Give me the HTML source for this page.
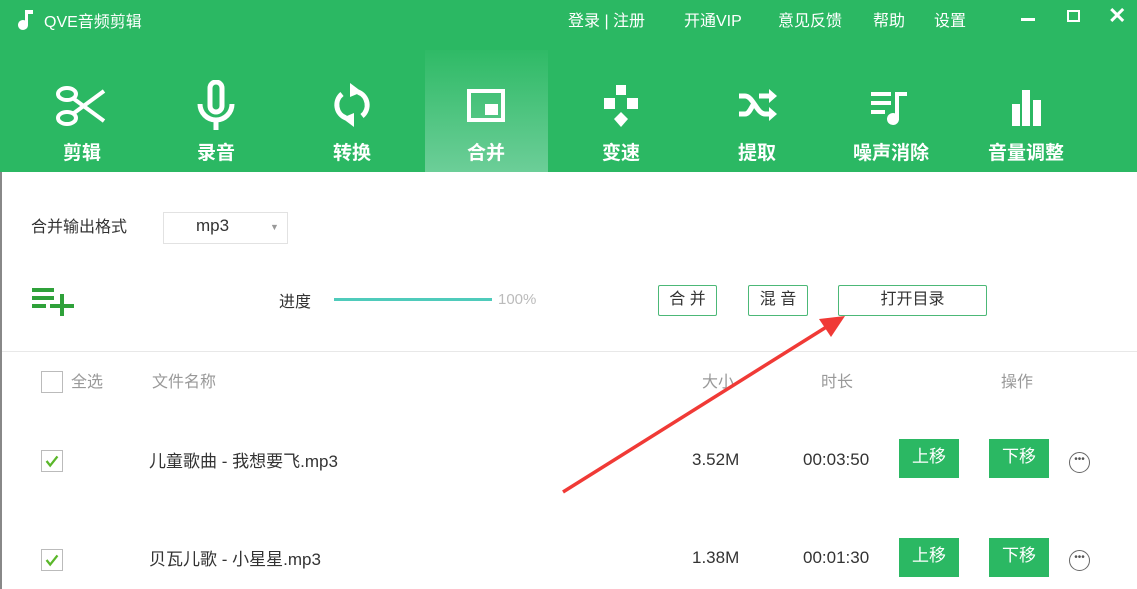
<!DOCTYPE html>
<html><head><meta charset="utf-8"><style>
*{margin:0;padding:0;box-sizing:border-box}
body{width:1137px;height:589px;overflow:hidden;background:#fff;position:relative;font-family:"Liberation Sans","Noto Sans CJK SC",sans-serif;color:#333}
.a{position:absolute;white-space:nowrap}
#hd{position:absolute;left:0;top:0;width:1137px;height:172px;background:#2bb863}
.top{color:#fff;font-size:16px;top:7px}
.tab{position:absolute;top:80px;width:120px;text-align:center;color:#fff}
.tab svg{display:block;margin:0 auto}
.tab span{position:absolute;left:0;right:0;top:58px;font-size:19px;font-weight:bold}
.btn{position:absolute;border:1.5px solid #4cb877;border-radius:2px;font-size:16px;text-align:center;color:#333;line-height:28px;height:31px}
.g{position:absolute;background:#2bb863;color:#fff;font-size:17px;text-align:center;width:60px;height:39px;line-height:36px}
.cb{position:absolute;width:22px;height:22px;border:1.5px solid #bbb;background:#fff}
.gr{color:#999;font-size:16px}
.more{position:absolute;width:21px;height:21px;border:1.5px solid #666;border-radius:50%;text-align:center;font-size:10px;line-height:14px;color:#555}
</style></head><body>
<div id="hd">
<svg class="a" style="left:16px;top:8px" width="18" height="22" viewBox="0 0 18 22"><path d="M9 2h8v4H12V17a5 5 0 1 1-3-4.6z" fill="#fff"/></svg>
<div class="a" style="left:44px;top:8px;color:#fff;font-size:16px">QVE音频剪辑</div>
<div class="a top" style="left:568px">登录 | 注册</div>
<div class="a top" style="left:684px">开通VIP</div>
<div class="a top" style="left:778px">意见反馈</div>
<div class="a top" style="left:873px">帮助</div>
<div class="a top" style="left:934px">设置</div>
<div class="a" style="left:1021px;top:18px;width:14px;height:3px;background:#fff"></div>
<div class="a" style="left:1067px;top:10px;width:13px;height:12px;border:2px solid #fff"></div>
<div class="a" style="left:1108px;top:3px;color:#fff;font-size:22px;font-weight:bold">✕</div>
<div class="a" style="left:425px;top:50px;width:123px;height:122px;background:linear-gradient(#2fba66,#6cce98)"></div>

<div class="tab" style="left:22px"><svg width="60" height="50" viewBox="0 0 60 50"><g fill="none" stroke="#fff" stroke-width="4"><ellipse cx="15" cy="14" rx="9" ry="6"/><ellipse cx="15" cy="38" rx="9" ry="6"/><path d="M22 19l30 22M22 33l30-22"/></g></svg><span>剪辑</span></div>
<div class="tab" style="left:156px"><svg width="60" height="50" viewBox="0 0 60 50"><g fill="none" stroke="#fff" stroke-width="5"><rect x="24" y="2" width="12" height="30" rx="6"/><path d="M14 24a16 16 0 0 0 32 0M30 40v10"/></g></svg><span>录音</span></div>
<div class="tab" style="left:292px"><svg width="60" height="50" viewBox="0 0 60 50"><g fill="none" stroke="#fff" stroke-width="5"><path d="M36 12a14 14 0 0 1 4 24M24 38a14 14 0 0 1-4-24"/></g><path d="M28 3l12 9-12 5zM32 47l-12-9 12-5z" fill="#fff"/></svg><span>转换</span></div>
<div class="tab" style="left:426px"><svg width="60" height="50" viewBox="0 0 60 50"><rect x="13" y="11" width="34" height="29" fill="none" stroke="#fff" stroke-width="4"/><rect x="29" y="24" width="13" height="11" fill="#fff"/></svg><span>合并</span></div>
<div class="tab" style="left:561px"><svg width="60" height="50" viewBox="0 0 60 50"><g fill="#fff"><rect x="25" y="5" width="10" height="10"/><rect x="13" y="18" width="11" height="11"/><rect x="36" y="18" width="11" height="11"/><path d="M30 32l7 7-7 8-7-8z"/></g></svg><span>变速</span></div>
<div class="tab" style="left:697px"><svg width="60" height="50" viewBox="0 0 60 50"><g fill="none" stroke="#fff" stroke-width="5"><path d="M12 16h6c8 0 12 18 20 18h6M12 34h6c4 0 6-6 8-9M32 16h12"/></g><path d="M42 9l8 7-8 7zM42 27l8 7-8 7z" fill="#fff"/></svg><span>提取</span></div>
<div class="tab" style="left:831px"><svg width="60" height="50" viewBox="0 0 60 50"><g fill="#fff"><rect x="10" y="12" width="20" height="4"/><rect x="10" y="21" width="20" height="4"/><rect x="10" y="30" width="14" height="4"/><rect x="34" y="12" width="12" height="4"/><rect x="34" y="12" width="4" height="28"/><circle cx="32" cy="39" r="6"/></g></svg><span>噪声消除</span></div>
<div class="tab" style="left:966px"><svg width="60" height="50" viewBox="0 0 60 50"><g fill="#fff"><rect x="16" y="24" width="8" height="22"/><rect x="26" y="10" width="8" height="36"/><rect x="37" y="20" width="8" height="26"/></g></svg><span>音量调整</span></div>
</div>
<div class="a" style="left:0;top:172px;width:2px;height:417px;background:#888"></div>

<div class="a" style="left:31px;top:213px;font-size:16px">合并输出格式</div>
<div class="a" style="left:163px;top:212px;width:125px;height:32px;border:1px solid #e2e2e2"></div>
<div class="a" style="left:196px;top:216px;font-size:17px">mp3</div>
<div class="a" style="left:270px;top:222px;font-size:9px;color:#999">▼</div>

<svg class="a" style="left:32px;top:288px" width="44" height="28" viewBox="0 0 44 28"><g fill="#2fa13a"><rect x="0" y="0" width="22" height="4"/><rect x="0" y="8" width="22" height="4"/><rect x="0" y="16" width="14" height="4"/><rect x="18" y="16" width="24" height="4"/><rect x="28" y="6" width="4" height="22"/></g></svg>
<div class="a" style="left:279px;top:288px;font-size:16px">进度</div>
<div class="a" style="left:334px;top:298px;width:158px;height:3px;background:#4fcbbb"></div>
<div class="a gr" style="left:498px;top:291px;font-size:15px;color:#bbb">100%</div>

<div class="btn" style="left:658px;top:285px;width:59px">合 并</div>
<div class="btn" style="left:748px;top:285px;width:60px">混 音</div>
<div class="btn" style="left:838px;top:285px;width:149px">打开目录</div>

<div class="a" style="left:2px;top:351px;width:1135px;height:1px;background:#e8e8e8"></div>

<div class="cb" style="left:41px;top:371px"></div>
<div class="a gr" style="left:71px;top:368px">全选</div>
<div class="a gr" style="left:152px;top:368px">文件名称</div>
<div class="a gr" style="left:702px;top:368px">大小</div>
<div class="a gr" style="left:821px;top:368px">时长</div>
<div class="a gr" style="left:1001px;top:368px">操作</div>

<svg class="cb" style="left:41px;top:450px" viewBox="0 0 22 22"><path d="M5 11l4 5 8-10" fill="none" stroke="#5ab72a" stroke-width="2.5"/></svg>
<div class="a" style="left:149px;top:447px;font-size:17px">儿童歌曲 - 我想要飞.mp3</div>
<div class="a" style="left:692px;top:450px;font-size:17px">3.52M</div>
<div class="a" style="left:803px;top:450px;font-size:17px">00:03:50</div>
<div class="g" style="left:899px;top:439px">上移</div>
<div class="g" style="left:989px;top:439px">下移</div>
<div class="more" style="left:1069px;top:452px">•••</div>

<svg class="cb" style="left:41px;top:549px" viewBox="0 0 22 22"><path d="M5 11l4 5 8-10" fill="none" stroke="#5ab72a" stroke-width="2.5"/></svg>
<div class="a" style="left:149px;top:545px;font-size:17px">贝瓦儿歌 - 小星星.mp3</div>
<div class="a" style="left:692px;top:548px;font-size:17px">1.38M</div>
<div class="a" style="left:803px;top:548px;font-size:17px">00:01:30</div>
<div class="g" style="left:899px;top:538px">上移</div>
<div class="g" style="left:989px;top:538px">下移</div>
<div class="more" style="left:1069px;top:550px">•••</div>

<svg class="a" style="left:0;top:0" width="1137" height="589"><line x1="563" y1="492" x2="828" y2="326" stroke="#f03a36" stroke-width="3.5"/><path d="M845 316l-26 3 12 18z" fill="#f03a36"/></svg>
</body></html>
